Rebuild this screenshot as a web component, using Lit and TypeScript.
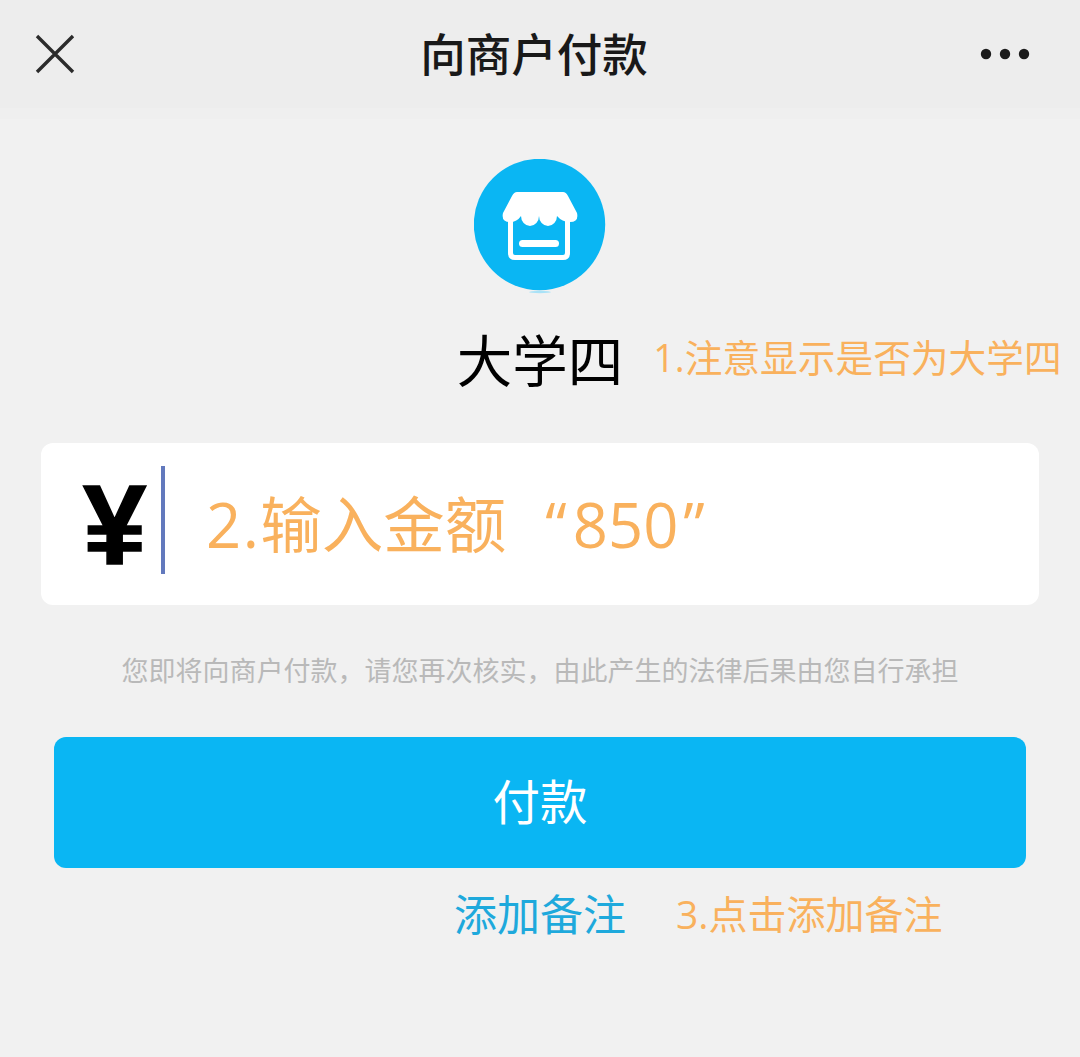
import { LitElement, html, css } from "lit";
import { customElement } from "lit/decorators.js";

@customElement("app-root")
export class AppRoot extends LitElement {
  static styles = css`
    :host {
      display: block;
      width: 1080px;
      height: 1057px;
      overflow: hidden;
      background: #f1f1f1;
      font-family: "Noto Sans CJK SC", "Liberation Sans", sans-serif;
    }

    .bar {
      height: 119px;
      box-sizing: border-box;
      padding: 0 50px 11px 35px;
      display: grid;
      grid-template-columns: 1fr auto 1fr;
      align-items: center;
      background: linear-gradient(#ededed 108px, #efefef 108px);
    }
    .close { width: 40px; height: 40px; display: block; }
    .title {
      font-size: 45.5px;
      font-weight: 500;
      color: #191919;
      line-height: 60px;
      margin: 0 0 4px 3px;
    }
    .more { justify-self: end; width: 50px; height: 12px; display: block; }

    .shop {
      display: block;
      width: 132px;
      height: 136px;
      margin: 40px auto 0;
    }

    .name-row {
      display: grid;
      grid-template-columns: 1fr auto 1fr;
      align-items: center;
      margin-top: 25px;
      height: 76px;
    }
    .name {
      grid-column: 2;
      font-size: 55.5px;
      color: #000;
      line-height: 76px;
    }
    .note {
      font-family: "Open Sans", "Noto Sans CJK SC", sans-serif;
      color: #f9b15d;
      white-space: nowrap;
    }
    .note-1 {
      font-size: 37.7px;
      margin: 0 0 5px 30px;
    }

    .card {
      margin: 47px 41px 0;
      height: 162px;
      box-sizing: border-box;
      padding-left: 42px;
      display: flex;
      align-items: center;
      background: #fff;
      border-radius: 12px;
    }
    .yen {
      width: 64px;
      font-family: "Liberation Sans", sans-serif;
      font-weight: 700;
      font-size: 114px;
      line-height: 116px;
      color: #000;
      -webkit-text-stroke: 1.5px #000;
      margin-top: 2px;
    }
    .caret {
      width: 4px;
      height: 108px;
      margin: 0 0 8px 14px;
      background: #6279bd;
    }
    .note-2 {
      margin-left: 41px;
      font-size: 61.5px;
      line-height: 80px;
    }
    .step {
      letter-spacing: 1.5px;
    }
    .quote-open {
      margin: 0 6px 0 39px;
    }
    .quote-close {
      margin-left: 5px;
    }

    .hint {
      margin-top: 45px;
      text-align: center;
      font-size: 27px;
      line-height: 40px;
      color: #b9b9b9;
      white-space: nowrap;
    }

    .pay {
      display: flex;
      align-items: center;
      justify-content: center;
      margin: 47px 54px 0;
      height: 131px;
      box-sizing: border-box;
      padding-bottom: 6px;
      background: #0ab6f3;
      border-radius: 12px;
      color: #fff;
      font-size: 47.5px;
    }

    .foot {
      display: grid;
      grid-template-columns: 1fr auto 1fr;
      align-items: center;
      margin-top: 13px;
      height: 60px;
    }
    .link {
      grid-column: 2;
      font-size: 43px;
      color: #1ea9dc;
    }
    .note-3 {
      font-size: 39px;
      margin-left: 50px;
    }
  `;

  render() {
    return html`
      <div class="bar">
        <svg class="close" viewBox="0 0 40 40">
          <path d="M2 2 38 38M38 2 2 38" stroke="#2b2b2b" stroke-width="3.4" fill="none" />
        </svg>
        <div class="title">向商户付款</div>
        <svg class="more" viewBox="0 0 50 12">
          <circle cx="6" cy="6" r="5.2" fill="#1c1c1c" />
          <circle cx="25" cy="6" r="5.2" fill="#1c1c1c" />
          <circle cx="44" cy="6" r="5.2" fill="#1c1c1c" />
        </svg>
      </div>

      <svg class="shop" viewBox="0 0 132 136">
        <circle cx="65.5" cy="65.5" r="65.7" fill="#0ab6f3" />
        <ellipse cx="66" cy="133" rx="11" ry="1.2" fill="#a9e2f7" />
        <path
          d="M36.5 60V94Q36.5 98.5 41 98.5H89Q93.5 98.5 93.5 94V60"
          fill="none"
          stroke="#fff"
          stroke-width="5"
          stroke-linejoin="round"
        />
        <path
          d="M43 33H89Q92 33 94 37L103 54Q105 63 96 63Q88 63 83 57A9 10 0 0 1 65 57A9 10 0 0 1 47 57Q43 63 36 63Q27 63 29 54L38 37Q40 33 43 33Z"
          fill="#fff"
        />
        <rect x="45" y="81" width="40" height="7" rx="3.5" fill="#fff" />
      </svg>

      <div class="name-row">
        <div class="name">大学四</div>
        <div class="note note-1">1.注意显示是否为大学四</div>
      </div>

      <div class="card">
        <div class="yen">¥</div>
        <div class="caret"></div>
        <div class="note note-2"><span class="step">2.</span>输入金额<span class="quote-open">“</span>850<span class="quote-close">”</span></div>
      </div>

      <div class="hint">您即将向商户付款，请您再次核实，由此产生的法律后果由您自行承担</div>

      <div class="pay">付款</div>

      <div class="foot">
        <div class="link">添加备注</div>
        <div class="note note-3">3.点击添加备注</div>
      </div>
    `;
  }
}
